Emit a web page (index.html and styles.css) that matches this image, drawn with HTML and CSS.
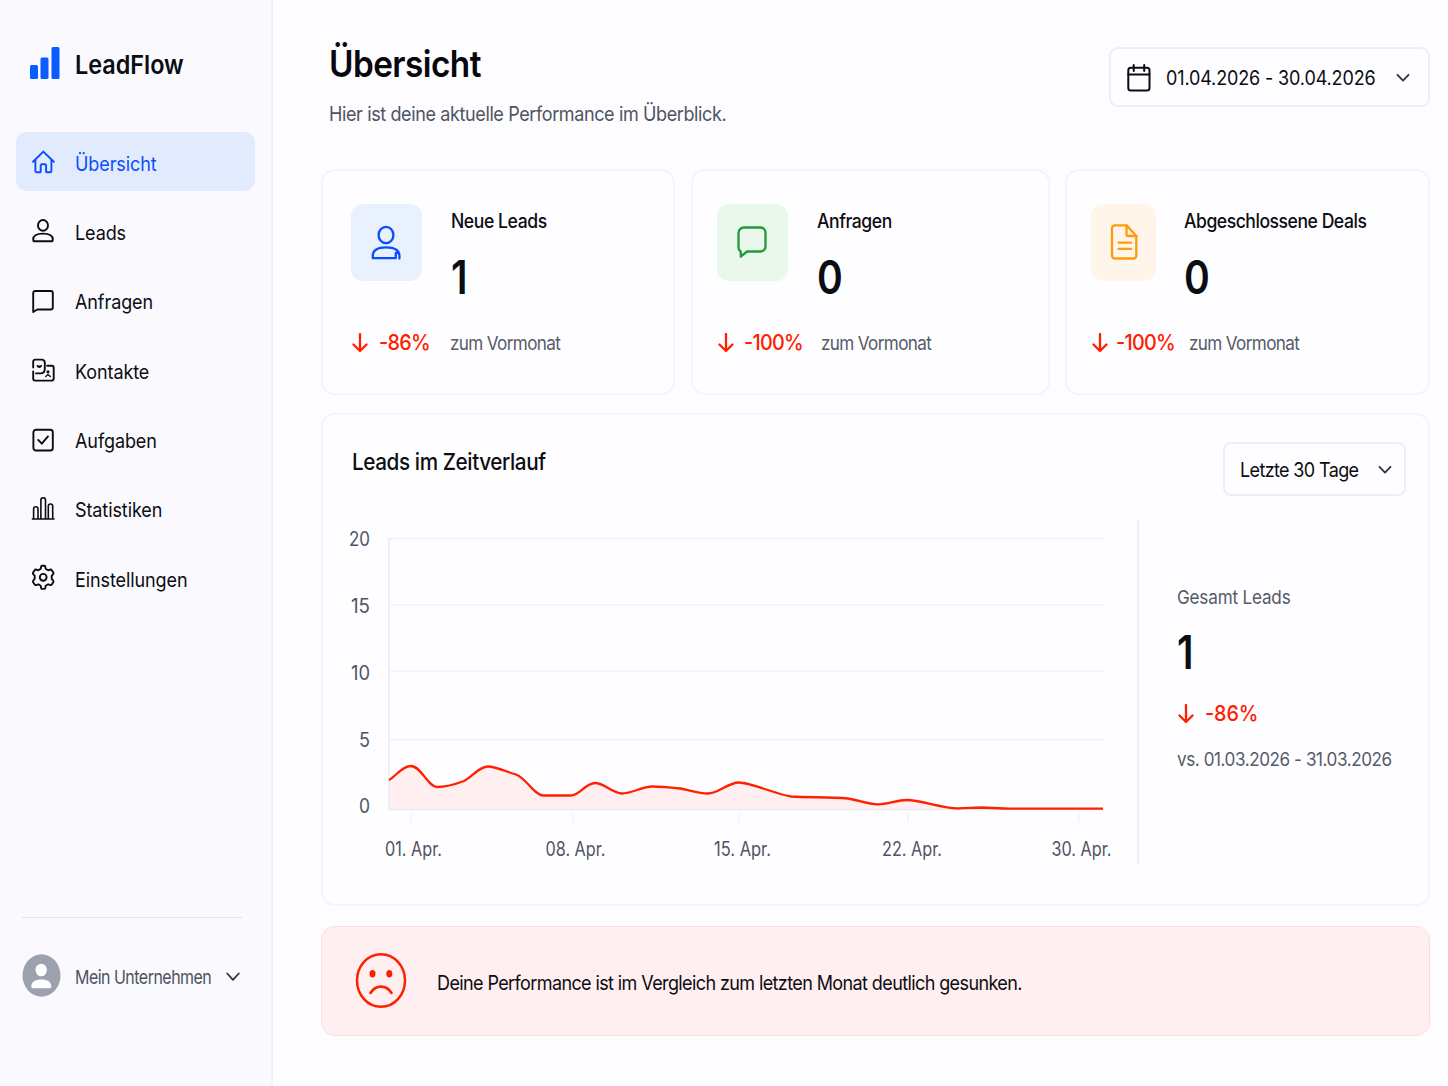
FILE: index.html
```html
<!DOCTYPE html>
<html lang="de">
<head>
    <meta charset="UTF-8">
    <meta name="viewport" content="width=device-width, initial-scale=1.0">
    <title>LeadFlow - Übersicht</title>
    <link rel="stylesheet" href="styles.css">
</head>
<body>
    <aside class="sidebar">
        <div class="logo">
            <svg width="30" height="32" viewBox="0 0 30 32" fill="#0a5cff">
                <rect x="0" y="18" width="8" height="14" rx="1.5"/>
                <rect x="10.5" y="10.5" width="8" height="21.5" rx="1.5"/>
                <rect x="21.5" y="0" width="8" height="32" rx="1.5"/>
            </svg>
            <span class="logo-text">LeadFlow</span>
        </div>

        <nav class="menu">
            <a class="menu-item active">
                <svg class="icon" viewBox="0 0 24 24"><path d="M1 11.800 11.300 1.600 21.800 11.800M3.400 10v11a1.300 1.300 0 0 0 1.300 1.300h3.200a.8.8 0 0 0 .8-.8v-6a1.300 1.300 0 0 1 1.300-1.300h2.800a1.300 1.300 0 0 1 1.300 1.300v6a.8.8 0 0 0 .8.8h3.200a1.300 1.300 0 0 0 1.300-1.300V10"/></svg>
                <span>Übersicht</span>
            </a>
            <a class="menu-item">
                <svg class="icon" viewBox="0 0 24 24"><ellipse cx="11" cy="6.400" rx="5" ry="5.400"/><path d="M1.200 20.400c0-3.800 3-5.800 9.800-5.800s9.800 2 9.800 5.800c0 1.300-.6 1.900-1.600 1.900H2.800c-1 0-1.600-.6-1.600-1.900z"/></svg>
                <span>Leads</span>
            </a>
            <a class="menu-item">
                <svg class="icon" viewBox="0 0 24 24"><path d="M3.300 2h15.500a2 2 0 0 1 2 2v14.500a2 2 0 0 1-2 2H5.300L1.200 23V4a2 2 0 0 1 2.100-2z"/></svg>
                <span>Anfragen</span>
            </a>
            <a class="menu-item">
                <svg class="icon" viewBox="0 0 24 24"><path d="M1.200 9.500V3.600a2 2 0 0 1 2-2h6.600a3 3 0 0 1 3 3v6.200c0 3-1.500 4.600-4.200 4.600H4M1.200 13.400v7.200a2 2 0 0 0 2 2h16.500a2 2 0 0 0 2-2V9.800a2 2 0 0 0-2-2h-4.500"/><path class="detail" d="M5.200 7.700c1 2.200 3.200 2.200 4.200 0L7.300 8.400zM13.700 18.500l2.300-2 2.300 2"/><circle class="detail" cx="16" cy="13.800" r=".9"/></svg>
                <span>Kontakte</span>
            </a>
            <a class="menu-item">
                <svg class="icon" viewBox="0 0 24 24"><rect x="1.400" y="1.700" width="19.400" height="20.800" rx="2.600"/><path d="m6.200 11.900 3.600 3.800 6.200-7.300"/></svg>
                <span>Aufgaben</span>
            </a>
            <a class="menu-item">
                <svg class="icon thin" viewBox="0 0 24 24"><path d="M.4 22h21.600M1.600 22V12a2.200 2.200 0 0 1 4.400 0v10M8.900 22V3a2.300 2.300 0 0 1 4.600 0v19M16.300 22V9.200a2.200 2.200 0 0 1 4.400 0v12.800"/></svg>
                <span>Statistiken</span>
            </a>
            <a class="menu-item">
                <svg class="icon" viewBox="0 0 24 24"><path d="M8.700 2.900 9.200.4c.1-.5.400-.7.800-.7h2.400c.4 0 .7.200.8.700l.5 2.500 2.400 1.400 2.500-.8c.5-.1.800 0 1 .4l1.800 2.800c.2.400.2.800-.1 1.100l-1.600 2.100v2.800l1.600 2.100c.3.300.3.700.1 1.100l-1.800 2.800c-.2.400-.5.500-1 .4l-2.500-.8-2.400 1.400-.5 2.500c-.1.500-.4.700-.8.700H10c-.4 0-.7-.2-.8-.7l-.5-2.500-2.400-1.400-2.500.8c-.5.100-.8 0-1-.4L1 15.900c-.2-.4-.2-.8.100-1.100l1.600-2.100V9.900L1.100 7.800c-.3-.3-.3-.7-.1-1.100l1.800-2.800c.2-.4.500-.5 1-.4l2.500.8z"/><circle cx="11.200" cy="11.300" r="3.400"/></svg>
                <span>Einstellungen</span>
            </a>
        </nav>

        <div class="account">
            <svg width="39" height="43" viewBox="0 0 39 43">
                <ellipse cx="19.500" cy="21.500" rx="19" ry="21.200" fill="#9da1ae"/>
                <ellipse cx="19.200" cy="16" rx="5.700" ry="6.300" fill="#fff"/>
                <path d="M9.300 32.500c0-4.500 4-7 10-7s10 2.500 10 7c0 1.200-.5 1.700-1.600 1.700H10.900c-1.100 0-1.600-.5-1.600-1.700z" fill="#fff"/>
            </svg>
            <span class="account-name">Mein Unternehmen</span>
            <svg class="chevron" width="14" height="10" viewBox="0 0 14 10"><path d="m1.200 1.500 5.800 6.300 5.800-6.300"/></svg>
        </div>
    </aside>

    <main class="content">
        <header class="header">
            <div>
                <h1>Übersicht</h1>
                <p class="subtitle">Hier ist deine aktuelle Performance im Überblick.</p>
            </div>
            <button class="date-range">
                <svg class="calendar" width="24" height="28" viewBox="0 0 24 28"><rect x="1.300" y="3.800" width="21.200" height="22.700" rx="2.500"/><path d="M1.300 10.500h21.200M6.700 1v6M17.200 1v6"/></svg>
                <span class="date-text">01.04.2026 - 30.04.2026</span>
                <svg class="chevron" width="14" height="10" viewBox="0 0 14 10"><path d="m1.500 1.800 5.500 5.800 5.500-5.800"/></svg>
            </button>
        </header>

        <section class="stats">
            <div class="card stat stat-leads">
                <div class="stat-top">
                    <div class="stat-icon blue">
                        <svg width="30" height="36" viewBox="0 0 30 36"><ellipse cx="15" cy="10" rx="7.400" ry="8.200"/><path d="M24.800 33.200H1.800V31c0-5.500 4-8.700 13.200-8.700S28.400 26 28.400 31v2.600M24.800 33.200v-5.200h1.500"/></svg>
                    </div>
                    <div>
                        <h2>Neue Leads</h2>
                        <div class="number">1</div>
                    </div>
                </div>
                <div class="stat-bottom">
                    <svg class="arrow" width="16" height="20" viewBox="0 0 16 20"><path d="M8 1v17M1.500 11.500 8 18l6.500-6.500"/></svg>
                    <span class="percent">-86%</span>
                    <span class="muted">zum Vormonat</span>
                </div>
            </div>

            <div class="card stat stat-requests">
                <div class="stat-top">
                    <div class="stat-icon green">
                        <svg width="30" height="36" viewBox="0 0 30 36"><path d="M7 2.500h16.500a5 5 0 0 1 5 5v14a5 5 0 0 1-5 5H10l-6.200 5.200V27C2.500 26 1.500 24.500 1.500 22V8a5.500 5.500 0 0 1 5.500-5.500z"/></svg>
                    </div>
                    <div>
                        <h2>Anfragen</h2>
                        <div class="number">0</div>
                    </div>
                </div>
                <div class="stat-bottom">
                    <svg class="arrow" width="16" height="20" viewBox="0 0 16 20"><path d="M8 1v17M1.500 11.500 8 18l6.500-6.500"/></svg>
                    <span class="percent">-100%</span>
                    <span class="muted">zum Vormonat</span>
                </div>
            </div>

            <div class="card stat stat-deals">
                <div class="stat-top">
                    <div class="stat-icon orange">
                        <svg width="28" height="36" viewBox="0 0 28 36"><path d="M5 1.300h11.500L26.300 12v19.500a3 3 0 0 1-3 3H5a3 3 0 0 1-3-3V4.300a3 3 0 0 1 3-3z"/><path d="M16.500 1.300V10a2 2 0 0 0 2 2h7.800M8.500 18.700h12.500M8.500 24.800h12.500"/></svg>
                    </div>
                    <div>
                        <h2>Abgeschlossene Deals</h2>
                        <div class="number">0</div>
                    </div>
                </div>
                <div class="stat-bottom">
                    <svg class="arrow" width="16" height="20" viewBox="0 0 16 20"><path d="M8 1v17M1.500 11.500 8 18l6.500-6.500"/></svg>
                    <span class="percent">-100%</span>
                    <span class="muted">zum Vormonat</span>
                </div>
            </div>
        </section>

        <section class="card chart-card">
            <div class="chart-header">
                <h2 class="chart-title">Leads im Zeitverlauf</h2>
                <button class="period">
                    <span class="period-text">Letzte 30 Tage</span>
                    <svg class="chevron" width="14" height="10" viewBox="0 0 14 10"><path d="m1.500 1.800 5.500 5.800 5.500-5.800"/></svg>
                </button>
            </div>
            <div class="chart-body">
                <svg class="chart" width="796" height="345" viewBox="341 520 796 345">
                    <g class="grid">
                        <path d="M389 538.500H1104M389 605H1104M389 671.500H1104M389 739.500H1104"/>
                        <path d="M411 813v9M573 813v9M739 813v9M908 813v9M1079 813v9"/>
                    </g>
                    <path class="area" d="M389 780C396 776 402 766 411 766C421 766 428 787 437 787C446 787 456 784 464 781C472 777 479 766.500 488 766.500C496 766.500 507 772 516 774.500C526 778 534 795 543 795.500H571C579 795.500 586 783 595 783C604 783 613 793.500 622 793.500C632 793.500 642 786.500 652 786.500C661 786.500 671 787.500 680 788.500C689 790 699 793.500 708 793.500C718 793.500 728 782.500 739 782.500C751 782.500 778 795 791 796.500C810 797.500 830 797 848 798.500C858 800 868 804.300 878 804.300C888 804.300 897 800 907 800C920 800 943 808.300 957 808.300C965 808.500 974 807.500 982 807.500C994 808 1003 808.700 1013 808.700H1103V809H389Z"/>
                    <path class="axis" d="M389 538V809.500H1104"/>
                    <path class="line" d="M389 780C396 776 402 766 411 766C421 766 428 787 437 787C446 787 456 784 464 781C472 777 479 766.500 488 766.500C496 766.500 507 772 516 774.500C526 778 534 795 543 795.500H571C579 795.500 586 783 595 783C604 783 613 793.500 622 793.500C632 793.500 642 786.500 652 786.500C661 786.500 671 787.500 680 788.500C689 790 699 793.500 708 793.500C718 793.500 728 782.500 739 782.500C751 782.500 778 795 791 796.500C810 797.500 830 797 848 798.500C858 800 868 804.300 878 804.300C888 804.300 897 800 907 800C920 800 943 808.300 957 808.300C965 808.500 974 807.500 982 807.500C994 808 1003 808.700 1013 808.700H1103"/>
                    <g class="labels">
                        <text x="349" y="546.400" textLength="21" lengthAdjust="spacingAndGlyphs">20</text>
                        <text x="351" y="613" textLength="19" lengthAdjust="spacingAndGlyphs">15</text>
                        <text x="351" y="680" textLength="19" lengthAdjust="spacingAndGlyphs">10</text>
                        <text x="359" y="747" textLength="11" lengthAdjust="spacingAndGlyphs">5</text>
                        <text x="359" y="813" textLength="11" lengthAdjust="spacingAndGlyphs">0</text>
                        <text x="385" y="856" textLength="57" lengthAdjust="spacingAndGlyphs">01. Apr.</text>
                        <text x="545.500" y="856" textLength="60" lengthAdjust="spacingAndGlyphs">08. Apr.</text>
                        <text x="714" y="856" textLength="57" lengthAdjust="spacingAndGlyphs">15. Apr.</text>
                        <text x="882" y="856" textLength="60" lengthAdjust="spacingAndGlyphs">22. Apr.</text>
                        <text x="1051.500" y="856" textLength="60" lengthAdjust="spacingAndGlyphs">30. Apr.</text>
                    </g>
                </svg>
                <div class="total">
                    <span class="muted total-label">Gesamt Leads</span>
                    <div class="number">1</div>
                    <div class="total-trend">
                        <svg class="arrow" width="16" height="20" viewBox="0 0 16 20"><path d="M8 1v17M1.500 11.500 8 18l6.500-6.500"/></svg>
                        <span class="percent">-86%</span>
                    </div>
                    <span class="muted compare">vs. 01.03.2026 - 31.03.2026</span>
                </div>
            </div>
        </section>

        <section class="alert">
            <svg width="52" height="58" viewBox="0 0 52 58">
                <ellipse cx="26" cy="28.500" rx="24" ry="26.300" fill="none" stroke="#ff2000" stroke-width="2.500"/>
                <ellipse cx="17.500" cy="21.700" rx="3" ry="3.700" fill="#ff2000"/>
                <ellipse cx="34.300" cy="21.700" rx="3" ry="3.700" fill="#ff2000"/>
                <path d="M15.500 41c5-8.500 16-8.500 21 0" fill="none" stroke="#ff2000" stroke-width="2.600" stroke-linecap="round"/>
            </svg>
            <span class="alert-text">Deine Performance ist im Vergleich zum letzten Monat deutlich gesunken.</span>
        </section>
    </main>
</body>
</html>
```

FILE: styles.css
```css
* {
    box-sizing: border-box;
}
body {
    margin: 0;
    display: flex;
    height: 1086px;
    font-family: Inter, "Liberation Sans", sans-serif;
    font-size: 20px;
    color: #0c0d12;
    background-color: #fdfcff;
    overflow: hidden;
}
h1, h2, p {
    margin: 0;
}
svg {
    flex-shrink: 0;
    display: block;
}
button {
    font: inherit;
    color: inherit;
    cursor: pointer;
}

/* condensed lettering */
h1, h2, .subtitle, .logo-text, .menu-item span, .account-name, .date-text,
.period-text, .number, .percent, .muted, .alert-text {
    display: block;
    white-space: nowrap;
    transform: scaleX(0.9);
    transform-origin: left center;
}

/* sidebar */
.sidebar {
    width: 273px;
    flex-shrink: 0;
    display: flex;
    flex-direction: column;
    padding: 47px 16px 0;
    background-color: #f9f9fe;
    border-right: 2px solid #f1f1f6;
}
.logo {
    display: flex;
    align-items: center;
    gap: 15.5px;
    height: 32px;
    padding-left: 13.5px;
}
.logo-text {
    font-size: 26px;
    font-weight: 600;
    line-height: 32px;
    padding-top: 4px;
}
.menu {
    display: flex;
    flex-direction: column;
    gap: 10.4px;
    margin-top: 53px;
}
.menu-item {
    display: flex;
    align-items: center;
    gap: 19px;
    width: 239px;
    height: 59px;
    padding: 1px 0 0 16px;
    border-radius: 11px;
}
.menu-item span {
    padding-top: 3px;
    letter-spacing: -0.1px;
}
.menu-item.active {
    color: #0a4dff;
    background-color: #e2ebfe;
}
.icon {
    width: 24px;
    height: 24px;
    fill: none;
    stroke: currentColor;
    stroke-width: 1.9;
    stroke-linejoin: round;
    stroke-linecap: round;
    overflow: visible;
}
.icon.thin {
    stroke-width: 1.6;
}
.detail {
    stroke-width: 1.4;
}
.account {
    display: flex;
    align-items: flex-start;
    width: 220px;
    height: 102px;
    margin: auto 0 67px 6px;
    padding-top: 36px;
    border-top: 1px solid #e3e4ea;
}
.account-name {
    width: 151px;
    margin-left: 14px;
    line-height: 43px;
    padding-top: 2px;
    font-size: 19px;
    letter-spacing: -0.6px;
    color: #4e5361;
    transform: scaleX(0.84);
}
.account .chevron {
    margin-top: 18px;
}
.chevron {
    fill: none;
    stroke: #33363f;
    stroke-width: 1.8;
    stroke-linecap: round;
    stroke-linejoin: round;
}

/* header */
.content {
    width: 1109px;
    margin-left: 48px;
}
.header {
    display: flex;
    justify-content: space-between;
    height: 169px;
    padding: 40px 0 0 8px;
}
h1 {
    font-size: 37px;
    font-weight: 600;
    line-height: 48px;
    letter-spacing: -0.6px;
    color: #08080c;
}
.subtitle {
    margin-top: 14px;
    line-height: 24px;
    letter-spacing: -0.42px;
    color: #4f5462;
}
.date-range {
    display: flex;
    align-items: center;
    width: 321px;
    height: 60px;
    margin-top: 7px;
    padding: 1px 0 0 16px;
    background-color: #fefdff;
    border: 2px solid #eeeff6;
    border-radius: 9px;
}
.calendar {
    fill: none;
    stroke: #0c0d12;
    stroke-width: 2;
    stroke-linecap: round;
}
.date-text {
    width: 230px;
    margin-left: 15px;
    text-align: left;
    letter-spacing: -0.15px;
}

/* cards */
.card {
    background-color: #fefdff;
    border: 2px solid #f4f4f9;
    border-radius: 14px;
}
.stats {
    display: grid;
    grid-template-columns: 354px 359px 365px;
    justify-content: space-between;
    height: 226px;
}
.stat {
    padding: 33px 0 0 24px;
}
.stat-leads {
    padding-left: 28px;
}
.stat-top {
    display: flex;
    gap: 29px;
    height: 126px;
}
.stat-deals .stat-top {
    gap: 28px;
}
.stat-icon {
    display: flex;
    align-items: center;
    justify-content: center;
    width: 71px;
    height: 77px;
    border-radius: 12px;
}
.stat-icon svg {
    fill: none;
    stroke-width: 2.3;
    stroke-linejoin: round;
    stroke-linecap: round;
}
.blue {
    padding-right: 1px;
    background-color: #e9f0fe;
    stroke: #0a4dff;
}
.green {
    background-color: #eaf7ec;
    stroke: #1f9a35;
}
.orange {
    width: 65px;
    padding-bottom: 1px;
    background-color: #fff5ea;
    stroke: #ff9a0a;
}
h2 {
    font-size: 19.5px;
    font-weight: 500;
    line-height: 24px;
    letter-spacing: -0.45px;
    padding-top: 5px;
}
.stat-deals h2 {
    letter-spacing: -0.5px;
}
.number {
    font-size: 46px;
    font-weight: 600;
    line-height: 56px;
    transform: scaleX(0.85);
}
.stat .number {
    margin-top: 16px;
}
.stat-bottom {
    display: flex;
    align-items: center;
    height: 26px;
    padding-left: 1px;
}
.arrow {
    fill: none;
    stroke: #ff2000;
    stroke-width: 2.3;
    stroke-linecap: round;
    stroke-linejoin: round;
}
.percent {
    width: 71px;
    margin-left: 11px;
    padding-bottom: 2px;
    font-size: 22px;
    font-weight: 500;
    letter-spacing: -0.8px;
    color: #ff2000;
}
.stat-requests .percent {
    width: 77px;
    margin-left: 10px;
}
.stat-deals .percent {
    width: 73px;
    margin-left: 8px;
}
.muted {
    font-size: 19px;
    letter-spacing: -0.7px;
    color: #565b69;
}

/* chart */
.chart-card {
    height: 493px;
    margin-top: 18px;
    padding-top: 27px;
}
.chart-header {
    display: flex;
    justify-content: space-between;
    padding: 0 22px 0 29px;
}
.chart-title {
    font-size: 23px;
    line-height: 28px;
    letter-spacing: -0.45px;
    padding-top: 6px;
}
.period {
    display: flex;
    align-items: center;
    width: 183px;
    height: 54px;
    padding: 1px 0 0 15px;
    background-color: #fefdff;
    border: 2px solid #eeeff6;
    border-radius: 8px;
}
.period-text {
    width: 138px;
    text-align: left;
    letter-spacing: -0.7px;
}
.chart-body {
    display: flex;
    margin-top: 24px;
    padding-left: 18px;
}
.grid {
    stroke: #f1f3f7;
    stroke-width: 1.5;
}
.axis {
    fill: none;
    stroke: #e9ebf1;
    stroke-width: 1.5;
}
.area {
    fill: #ffeff0;
}
.line {
    fill: none;
    stroke: #ff2000;
    stroke-width: 2.3;
}
.labels {
    font-size: 19.5px;
    fill: #4f5462;
}
.total {
    width: 270px;
    height: 345px;
    padding: 66px 0 0 38px;
    border-left: 2px solid #eceff4;
}
.total-label {
    line-height: 24px;
    letter-spacing: -0.2px;
}
.total .number {
    margin-top: 14px;
}
.total-trend {
    display: flex;
    align-items: center;
    height: 26px;
    margin-top: 21px;
    padding-left: 1px;
}
.total .percent {
    letter-spacing: -0.1px;
}
.compare {
    margin-top: 21px;
    line-height: 24px;
    letter-spacing: -0.48px;
}

/* alert */
.alert {
    display: flex;
    align-items: center;
    gap: 30px;
    height: 110px;
    margin-top: 20px;
    padding-left: 33px;
    background-color: #ffeff0;
    border: 1.5px solid #ffdcdd;
    border-radius: 14px;
}
.alert-text {
    padding-top: 4px;
    letter-spacing: -0.67px;
}
```
